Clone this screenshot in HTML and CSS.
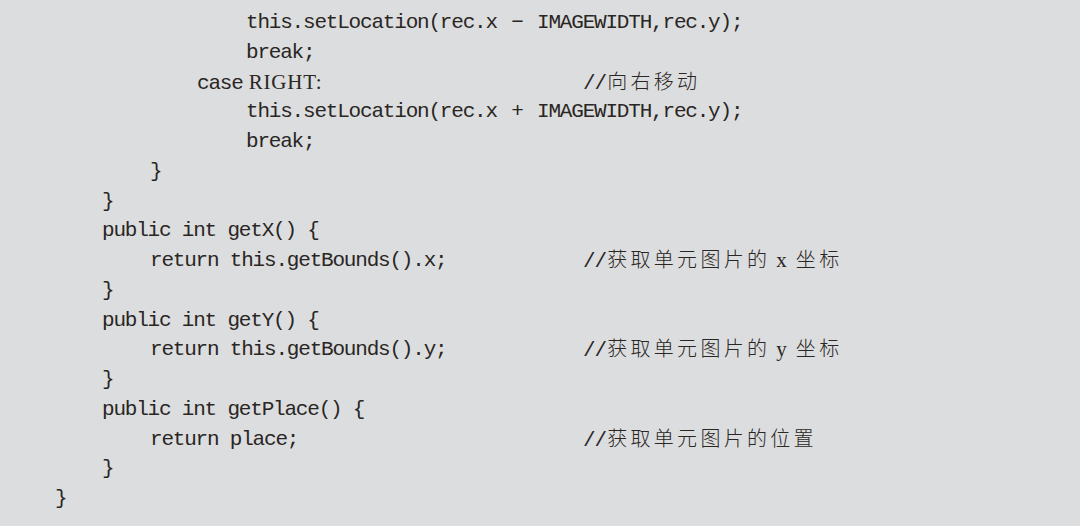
FILE: index.html
```html
<!DOCTYPE html>
<html lang="zh-CN">
<head>
<meta charset="utf-8">
<title>Code listing</title>
<link rel="stylesheet" href="styles.css">
</head>
<body>
<main class="listing">
  <div class="line l4"><span class="code">this.setLocation(rec.x <span class="op">−</span> IMAGEWIDTH,rec.y);</span></div>
  <div class="line l4"><span class="code">break;</span></div>
  <div class="line l3"><span class="code">case<span class="prop"> RIGHT:</span></span><span class="cmt"><span class="sl">//</span>向右移动</span></div>
  <div class="line l4"><span class="code">this.setLocation(rec.x <span class="op">+</span> IMAGEWIDTH,rec.y);</span></div>
  <div class="line l4"><span class="code">break;</span></div>
  <div class="line l2"><span class="code">}</span></div>
  <div class="line l1"><span class="code">}</span></div>
  <div class="line l1"><span class="code">public int getX() {</span></div>
  <div class="line l2"><span class="code">return this.getBounds().x;</span><span class="cmt"><span class="sl">//</span>获取单元图片的<span class="lat">x</span>坐标</span></div>
  <div class="line l1"><span class="code">}</span></div>
  <div class="line l1"><span class="code">public int getY() {</span></div>
  <div class="line l2"><span class="code">return this.getBounds().y;</span><span class="cmt"><span class="sl">//</span>获取单元图片的<span class="lat">y</span>坐标</span></div>
  <div class="line l1"><span class="code">}</span></div>
  <div class="line l1"><span class="code">public int getPlace() {</span></div>
  <div class="line l2"><span class="code">return place;</span><span class="cmt"><span class="sl">//</span>获取单元图片的位置</span></div>
  <div class="line l1"><span class="code">}</span></div>
  <div class="line l0"><span class="code">}</span></div>
</main>
</body>
</html>
```

FILE: styles.css
```css
html, body {
  margin: 0;
  padding: 0;
  background: #dcdddf;
}

body {
  width: 1080px;
  height: 526px;
  overflow: hidden;
}

.listing {
  padding: 8px 0 0 55px;
  color: #2a2623;
  font-family: "Liberation Mono", "Noto Sans CJK SC", monospace;
  font-size: 21px;
  line-height: 29.75px;
  letter-spacing: -1.2px;
}

.line {
  display: grid;
  grid-template-columns: 528px auto;
  align-items: start;
  height: 29.75px;
  white-space: pre;
}

.line .code {
  min-width: 0;
}

.l0 .code { padding-left: 0; }
.l1 .code { padding-left: 47px; }
.l2 .code { padding-left: 95px; }
.l3 .code { padding-left: 142px; }
.l4 .code { padding-left: 191px; }

.op {
  padding: 0 3px;
}

.prop {
  font-family: "Liberation Serif", serif;
  letter-spacing: 0.8px;
}

.cmt {
  grid-column: 2;
  font-family: "Noto Sans CJK SC", sans-serif;
  font-size: 20px;
  font-weight: 300;
  line-height: 26px;
  letter-spacing: 3.3px;
}

.sl {
  font-family: "Liberation Mono", monospace;
  font-size: 21px;
  letter-spacing: -1px;
  padding-right: 1px;
}

.lat {
  font-family: "Liberation Serif", serif;
  font-size: 21px;
  padding: 0 9px 0 6px;
  letter-spacing: 0;
}
```
